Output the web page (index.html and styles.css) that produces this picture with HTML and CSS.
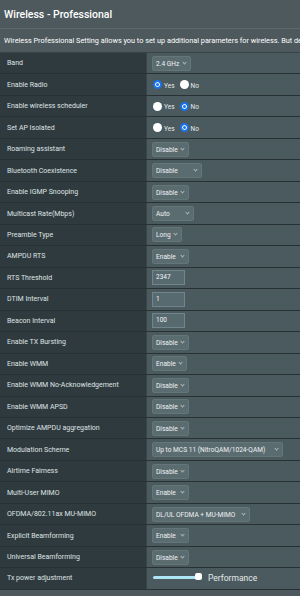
FILE: index.html
```html
<!DOCTYPE html>
<html lang="en">
<head>
    <meta charset="UTF-8">
    <meta name="viewport" content="width=device-width, initial-scale=1.0">
    <title>Wireless - Professional</title>
    <link rel="stylesheet" href="styles.css">
</head>
<body>
    <div class="page">
        <div class="title">Wireless - Professional</div>
        <div class="desc">Wireless Professional Setting allows you to set up additional parameters for wireless. But default values are recommended.</div>

        <div class="settings">
            <div class="row"><div class="label">Band</div><div class="value"><span class="sel w38">2.4 GHz</span></div></div>
            <div class="row"><div class="label">Enable Radio</div><div class="value"><span class="radio on"></span><span class="rlabel">Yes</span><span class="radio"></span><span class="rlabel">No</span></div></div>
            <div class="row"><div class="label">Enable wireless scheduler</div><div class="value"><span class="radio"></span><span class="rlabel">Yes</span><span class="radio on"></span><span class="rlabel">No</span></div></div>
            <div class="row"><div class="label">Set AP Isolated</div><div class="value"><span class="radio"></span><span class="rlabel">Yes</span><span class="radio on"></span><span class="rlabel">No</span></div></div>
            <div class="row"><div class="label">Roaming assistant</div><div class="value"><span class="sel">Disable</span></div></div>
            <div class="row"><div class="label">Bluetooth Coexistence</div><div class="value"><span class="sel w50">Disable</span></div></div>
            <div class="row"><div class="label">Enable IGMP Snooping</div><div class="value"><span class="sel">Disable</span></div></div>
            <div class="row"><div class="label">Multicast Rate(Mbps)</div><div class="value"><span class="sel w42">Auto</span></div></div>
            <div class="row"><div class="label">Preamble Type</div><div class="value"><span class="sel w30">Long</span></div></div>
            <div class="row"><div class="label">AMPDU RTS</div><div class="value"><span class="sel w36">Enable</span></div></div>
            <div class="row"><div class="label">RTS Threshold</div><div class="value"><span class="field">2347</span></div></div>
            <div class="row"><div class="label">DTIM Interval</div><div class="value"><span class="field">1</span></div></div>
            <div class="row"><div class="label">Beacon Interval</div><div class="value"><span class="field">100</span></div></div>
            <div class="row"><div class="label">Enable TX Bursting</div><div class="value"><span class="sel">Disable</span></div></div>
            <div class="row"><div class="label">Enable WMM</div><div class="value"><span class="sel w34">Enable</span></div></div>
            <div class="row"><div class="label">Enable WMM No-Acknowledgement</div><div class="value"><span class="sel">Disable</span></div></div>
            <div class="row"><div class="label">Enable WMM APSD</div><div class="value"><span class="sel">Disable</span></div></div>
            <div class="row"><div class="label">Optimize AMPDU aggregation</div><div class="value"><span class="sel">Disable</span></div></div>
            <div class="row"><div class="label">Modulation Scheme</div><div class="value"><span class="sel w131">Up to MCS 11 (NitroQAM/1024-QAM)</span></div></div>
            <div class="row"><div class="label">Airtime Fairness</div><div class="value"><span class="sel">Disable</span></div></div>
            <div class="row"><div class="label">Multi-User MIMO</div><div class="value"><span class="sel w36">Enable</span></div></div>
            <div class="row"><div class="label">OFDMA/802.11ax MU-MIMO</div><div class="value"><span class="sel w98">DL/UL OFDMA + MU-MIMO</span></div></div>
            <div class="row"><div class="label">Explicit Beamforming</div><div class="value"><span class="sel w36">Enable</span></div></div>
            <div class="row"><div class="label">Universal Beamforming</div><div class="value"><span class="sel">Disable</span></div></div>
            <div class="row"><div class="label">Tx power adjustment</div><div class="value"><span class="slider"><span class="track"></span><span class="thumb"></span></span><span class="perf">Performance</span></div></div>
        </div>
    </div>
</body>
</html>
```

FILE: styles.css
```css
/* General Styles */
body {
    margin: 0;
    padding: 0;
    background: #4d595d;
    font-family: Roboto, "Liberation Sans", Arial, sans-serif;
    color: #fff;
    overflow: hidden;
}

.page {
    width: 300px;
}

.title {
    height: 28px;
    line-height: 30px;
    padding-left: 4px;
    font-size: 10.5px;
    font-weight: 500;
    border-bottom: 1px solid #5b676b;
}

.desc {
    height: 23px;
    line-height: 24px;
    padding-left: 4px;
    font-size: 7.3px;
    white-space: nowrap;
    overflow: hidden;
    border-bottom: 1px solid #3a4448;
}

.settings {
    display: flex;
    flex-direction: column;
}

.row {
    display: grid;
    grid-template-columns: 147px 1fr;
    height: 21.48px;
    box-sizing: border-box;
    border-bottom: 1px solid #283134;
}

.label {
    background: #2f3a3e;
    border-right: 1px solid #3b4649;
    padding-left: 7px;
    display: flex;
    align-items: center;
    font-size: 7px;
    color: #dfe3e4;
}

.value {
    background: #4a5a5f;
    display: flex;
    align-items: center;
    padding-left: 5px;
    font-size: 7px;
}

/* select box */
.sel {
    position: relative;
    box-sizing: border-box;
    width: 37px;
    height: 15px;
    line-height: 14px;
    padding-left: 3px;
    background: #5b6c71;
    border: 1px solid #65767b;
    border-radius: 2px;
    color: #eef1f1;
    font-size: 6.6px;
    white-space: nowrap;
}

.sel::after {
    content: "";
    position: absolute;
    right: 4px;
    top: 4px;
    width: 2px;
    height: 2px;
    border-right: 1px solid #a9b6b9;
    border-bottom: 1px solid #a9b6b9;
    transform: rotate(45deg);
}

.w30 { width: 30px; }
.w34 { width: 35px; }
.w36 { width: 37px; }
.w38 { width: 39px; }
.w42 { width: 42px; }
.w50 { width: 50px; }
.w98 { width: 98px; }
.w131 { width: 131px; }

/* text field */
.field {
    box-sizing: border-box;
    width: 33px;
    height: 15px;
    line-height: 13px;
    padding-left: 3px;
    background: #576a6f;
    border: 1px solid #71858a;
    color: #f2f4f4;
    font-size: 6.5px;
}

/* radio */
.radio {
    box-sizing: border-box;
    width: 9px;
    height: 9px;
    margin-left: 1px;
    border-radius: 50%;
    background: #fff;
}

.radio.on {
    border: 2px solid #1a73e8;
    box-shadow: inset 0 0 0 1px #fff;
    background: #1a73e8;
}

.rlabel {
    font-size: 6.5px;
    margin: 2px 4px 0 2px;
    color: #e6e9ea;
}

/* slider */
.slider {
    position: relative;
    width: 48px;
    height: 10px;
    margin-left: 1px;
}

.track {
    position: absolute;
    left: 0;
    top: 3px;
    width: 46px;
    height: 3px;
    border-radius: 2px;
    background: #aee5f4;
}

.thumb {
    position: absolute;
    left: 42px;
    top: 0;
    width: 7px;
    height: 7px;
    border-radius: 2px;
    background: #fff;
}

.perf {
    margin-left: 7px;
    font-size: 8.5px;
    color: #e6e9ea;
}
```
